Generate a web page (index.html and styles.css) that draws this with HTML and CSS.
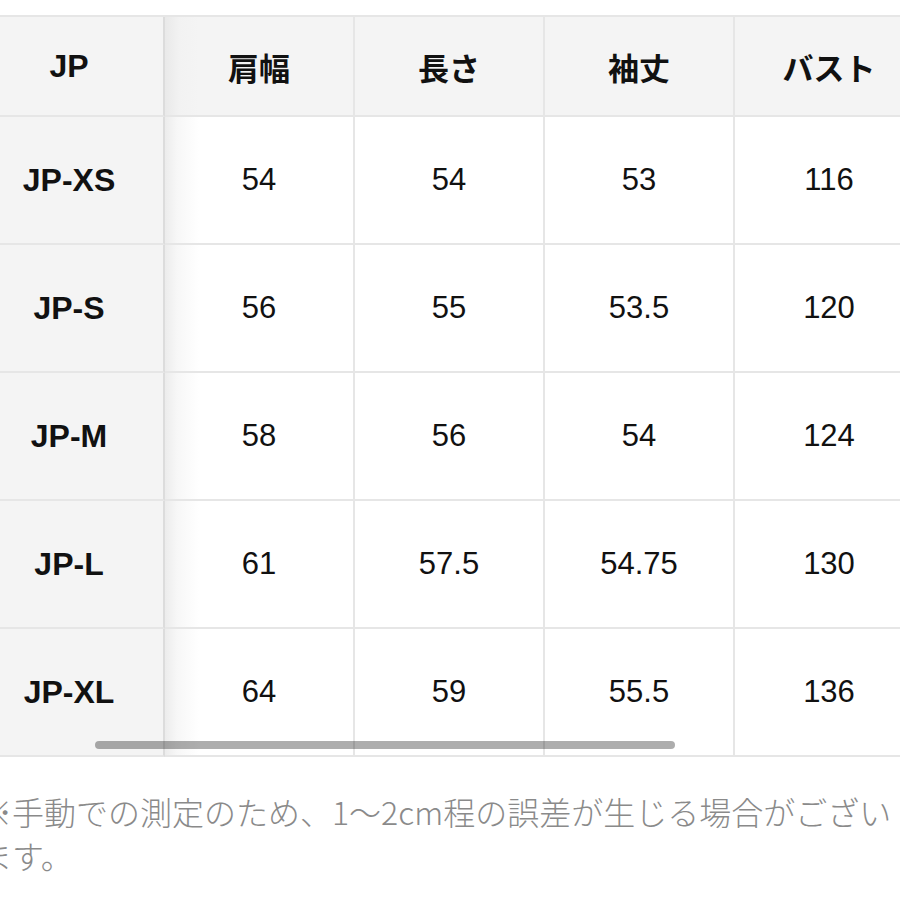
FILE: index.html
```html
<!DOCTYPE html>
<html lang="ja">
<head>
<meta charset="utf-8">
<link rel="stylesheet" href="styles.css">
</head>
<body>
<div class="scroller">
  <div class="grid">
    <div class="cell head first">JP</div>
    <div class="cell head second">肩幅</div>
    <div class="cell head">長さ</div>
    <div class="cell head">袖丈</div>
    <div class="cell head">バスト</div>

    <div class="cell first">JP-XS</div>
    <div class="cell data second">54</div>
    <div class="cell data">54</div>
    <div class="cell data">53</div>
    <div class="cell data">116</div>

    <div class="cell first">JP-S</div>
    <div class="cell data second">56</div>
    <div class="cell data">55</div>
    <div class="cell data">53.5</div>
    <div class="cell data">120</div>

    <div class="cell first">JP-M</div>
    <div class="cell data second">58</div>
    <div class="cell data">56</div>
    <div class="cell data">54</div>
    <div class="cell data">124</div>

    <div class="cell first">JP-L</div>
    <div class="cell data second">61</div>
    <div class="cell data">57.5</div>
    <div class="cell data">54.75</div>
    <div class="cell data">130</div>

    <div class="cell first">JP-XL</div>
    <div class="cell data second">64</div>
    <div class="cell data">59</div>
    <div class="cell data">55.5</div>
    <div class="cell data">136</div>
  </div>
  <div class="scrollbar"></div>
</div>
<p class="note">※手動での測定のため、1～2cm程の誤差が生じる場合がございます。</p>
</body>
</html>
```

FILE: styles.css
```css
html, body {
  margin: 0;
  padding: 0;
  background: #ffffff;
  overflow: hidden;
  width: 900px;
  height: 900px;
}

body {
  font-family: "Liberation Sans", "Noto Sans CJK JP", sans-serif;
  color: #111111;
}

.scroller {
  position: relative;
  margin-top: 15px;
  margin-left: -25px;
  width: 1000px;
}

.grid {
  display: grid;
  grid-template-columns: repeat(5, 190px);
  grid-auto-rows: 128px;
  grid-template-rows: 100px;
  border-top: 2px solid #e6e6e6;
}

.cell {
  display: flex;
  align-items: center;
  justify-content: center;
  border-right: 2px solid #e6e6e6;
  border-bottom: 2px solid #e6e6e6;
  background: #ffffff;
  font-size: 31px;
}

.head {
  background: #f4f4f4;
  font-weight: bold;
  font-size: 31px;
}

.first {
  background: #f4f4f4;
  font-weight: bold;
  font-size: 32px;
  border-right-color: #dcdcdc;
}

.second {
  background: linear-gradient(to right, #ececec 0px, #f7f7f7 12px, #ffffff 34px);
}

.head.second {
  background: linear-gradient(to right, #e9e9e9 0px, #f2f2f2 14px, #f4f4f4 34px);
}

.data {
  font-weight: normal;
}

.scrollbar {
  position: absolute;
  left: 120px;
  bottom: 8px;
  width: 580px;
  height: 8px;
  border-radius: 4px;
  background: rgba(0, 0, 0, 0.32);
}

.note {
  margin: 32px 0 0 -20px;
  width: 920px;
  font-family: "Noto Sans CJK JP", sans-serif;
  font-weight: 300;
  font-size: 32px;
  line-height: 44px;
  color: #8a8a8a;
}
```
